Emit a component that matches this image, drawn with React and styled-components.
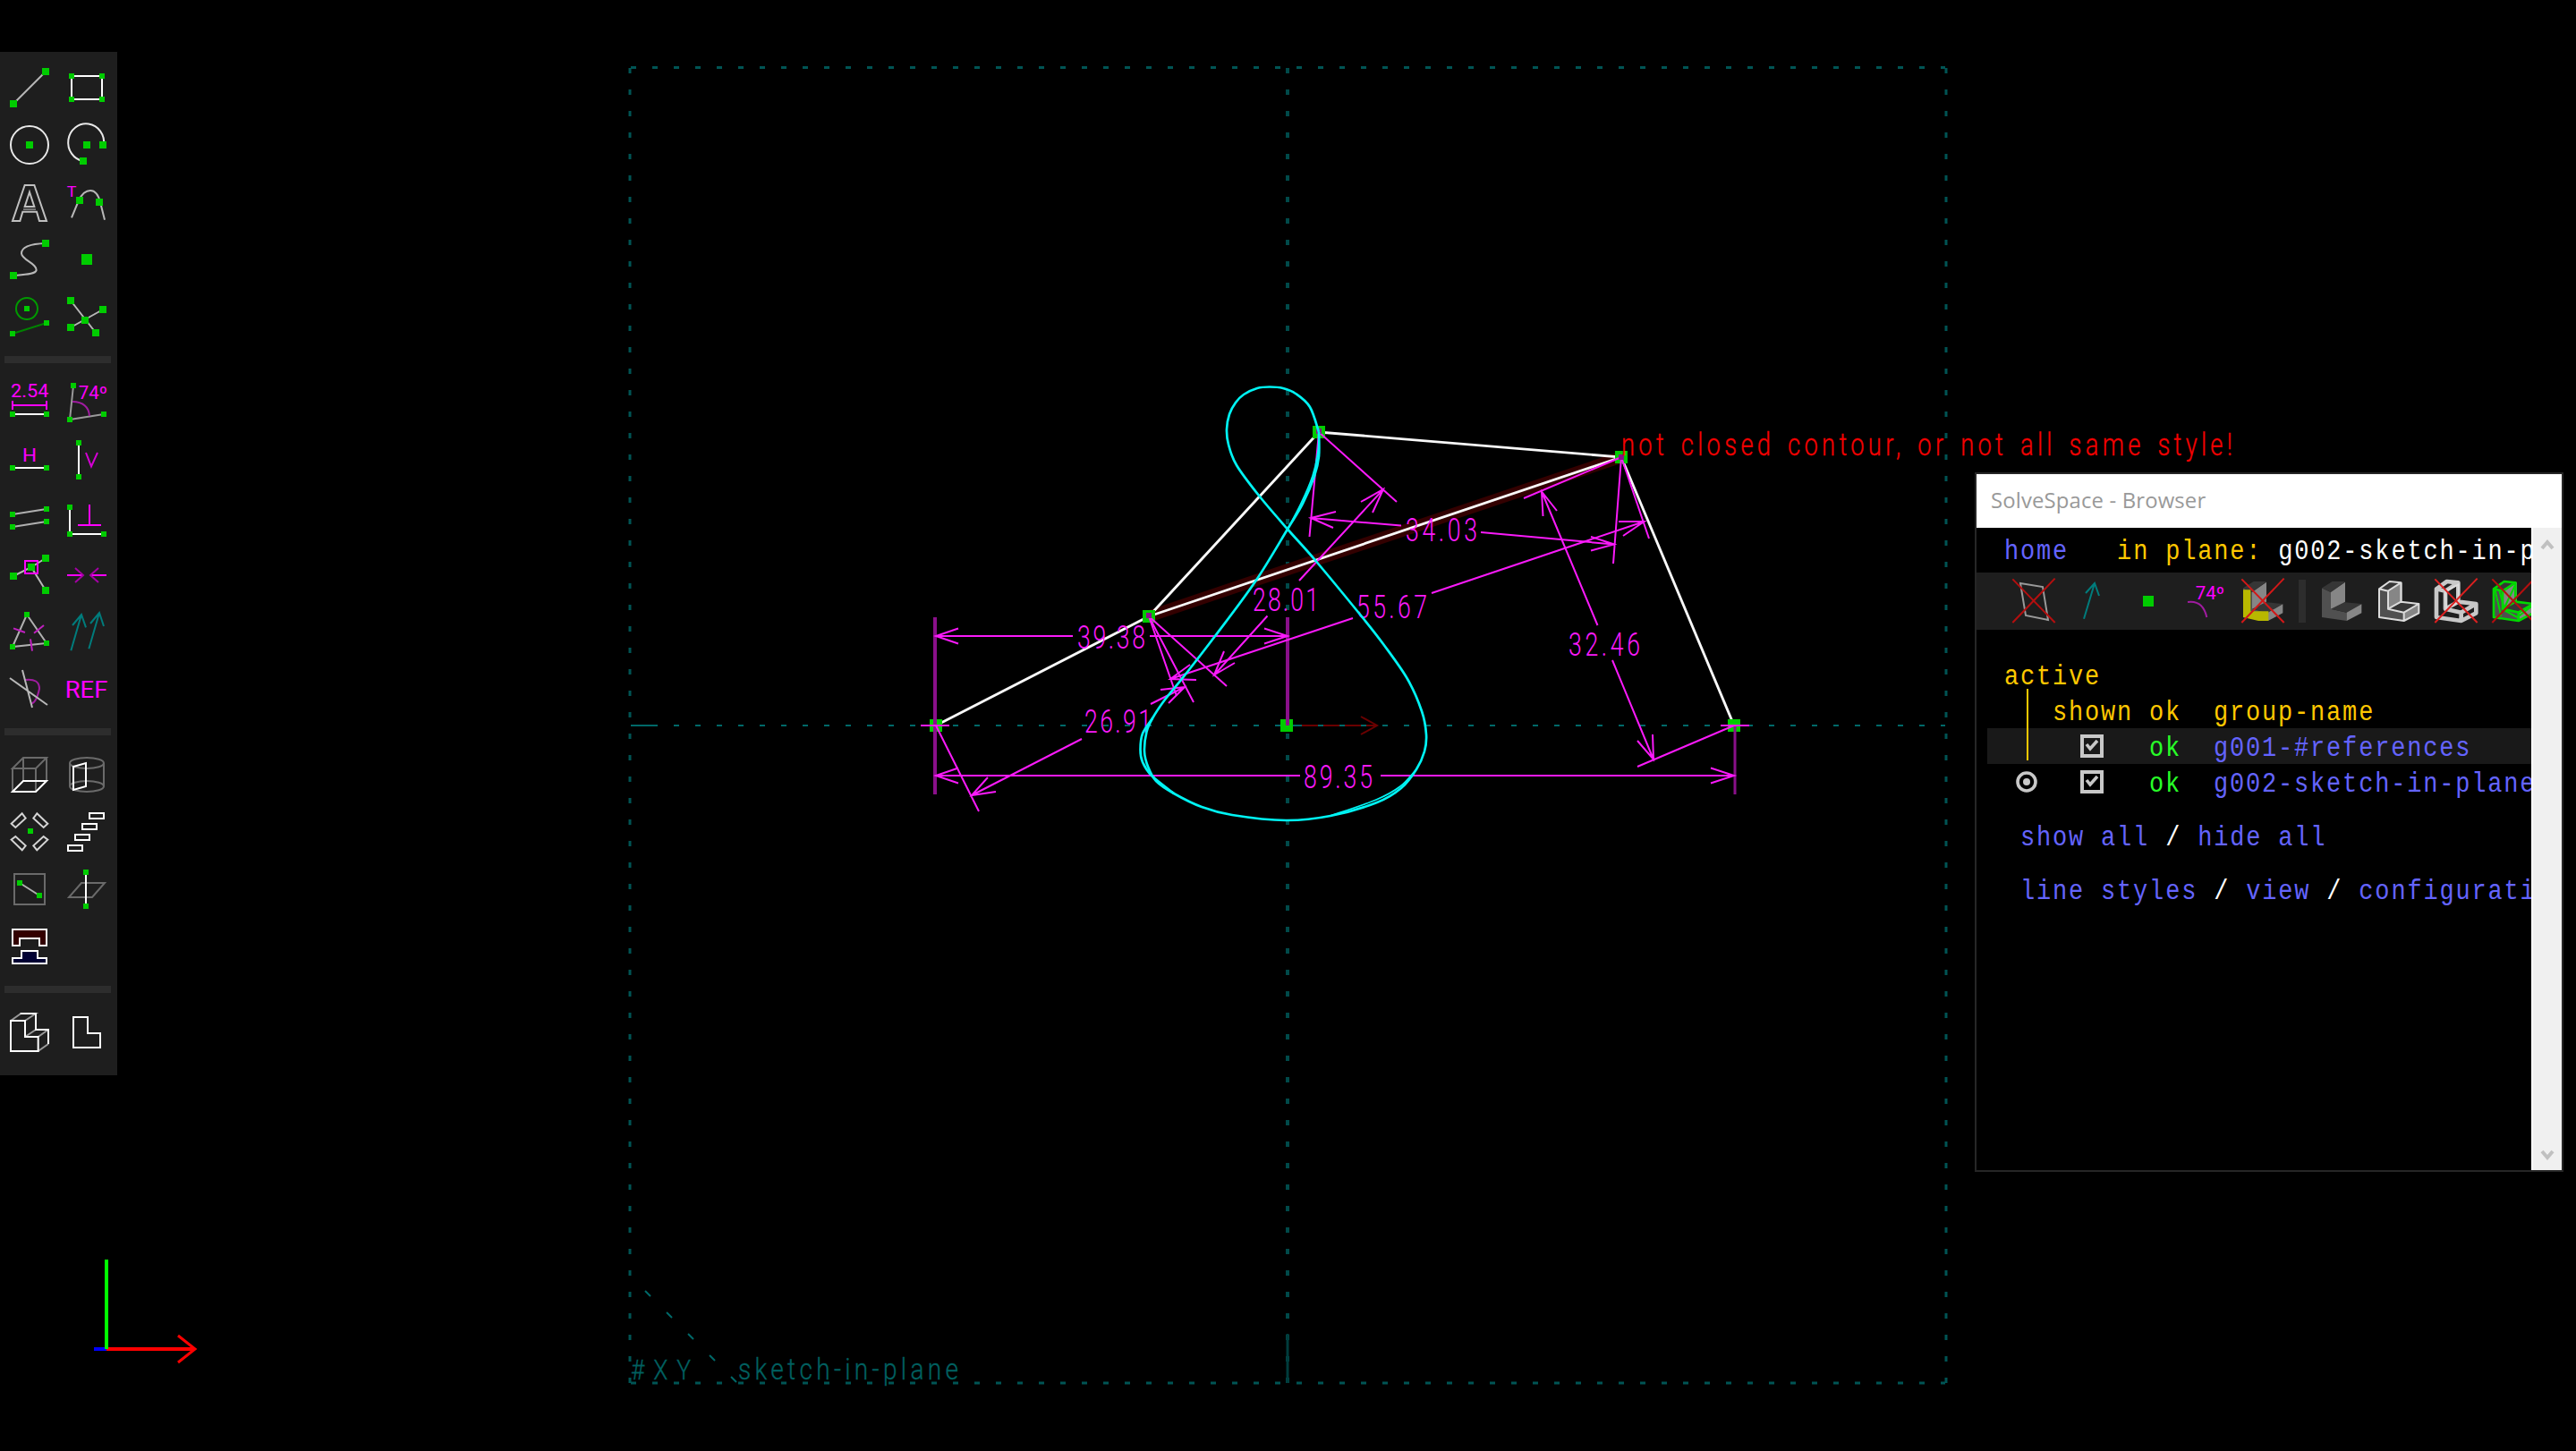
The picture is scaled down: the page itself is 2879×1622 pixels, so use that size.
import React from 'react';
import styled, { createGlobalStyle } from 'styled-components';

const color = {
  panel: '#1e1e1e',
  divider: '#2d2d2d',
  green: '#00cc00',
  magenta: '#ff00ff',
  dim: '#fa1afa',
  dimDark: '#8a108a',
  teal: '#006868',
  white: '#ffffff',
  stroke: '#b8b8b8',
  gray: '#6a6a6a',
  link: '#6464ff',
  label: '#ffc800',
  ok: '#28ff28',
};

const GlobalStyle = createGlobalStyle`
  html, body { margin: 0; background: #000; overflow: hidden; }
  * { box-sizing: border-box; }
`;

const Screen = styled.main`
  display: grid;
  grid-template: 1622px / 2879px;
  background: #000;
  overflow: hidden;
  > * { grid-area: 1 / 1; }
`;

const Canvas = styled.svg`
  display: block;
  width: 2879px;
  height: 1622px;
`;

/* ---------- tool bar ---------- */

const ToolBar = styled.nav`
  position: relative;
  align-self: start;
  justify-self: start;
  display: flex;
  flex-direction: column;
  width: 131px;
  height: 1144px;
  margin-top: 58px;
  padding: 8px 2px 0 1px;
  background: ${color.panel};
`;

const ToolGroup = styled.div`
  display: grid;
  grid-template-columns: 64px 64px;
  grid-auto-rows: 64px;
`;

const ToolDivider = styled.div`
  height: 8px;
  margin: 12px 5px 12px 4px;
  background: ${color.divider};
`;

const ToolButton = styled.button`
  display: block;
  width: 64px;
  height: 64px;
  padding: 0;
  border: 0;
  background: none;
`;

const Glyph = styled.svg`
  display: block;
  width: 64px;
  height: 64px;
  fill: none;
  stroke-width: 6;
`;

const Dots = ({ at, s = 18, fill = color.green }) =>
  at.map(([x, y], i) => (
    <rect key={i} x={x - s / 2} y={y - s / 2} width={s} height={s} fill={fill} stroke="none" />
  ));

const Label = ({ x, y, w, size, children }) => (
  <text
    x={x}
    y={y}
    textLength={w}
    lengthAdjust="spacingAndGlyphs"
    fontSize={size}
    fontFamily="Roboto, sans-serif"
    fill={color.magenta}
    stroke="none"
  >
    {children}
  </text>
);

const W = color.white;
const S = color.stroke;
const M = color.magenta;
const P = '#a01ca0';

const drawTools = [
  <>
    <path d="M45 198L153 90" stroke={S} />
    <Dots at={[[45, 198], [153, 90]]} s={24} />
  </>,
  <>
    <rect x="240" y="105" width="102" height="78" stroke={W} />
    <Dots at={[[240, 105], [342, 105], [240, 183], [342, 183]]} />
  </>,
  <>
    <circle cx="99" cy="336" r="63" stroke="#e8e8e8" />
    <Dots at={[[99, 336]]} s={24} />
  </>,
  <>
    <path d="M348 336A60 63 0 1 0 279 390" stroke="#e8e8e8" />
    <Dots at={[[291, 336], [345, 336], [279, 390]]} s={24} />
  </>,
  <>
    <path
      d="M42 591L83 471H115L156 591H132L123 560H76L67 591ZM83 543L99 494L115 543Z"
      stroke="#c0c0c0"
    />
    <path d="M78 552H120" stroke="#777" />
  </>,
  <>
    <path d="M240 580L264 522Q280 489 303 489Q326 489 336 528L351 587" stroke={S} />
    <Dots at={[[267, 522], [333, 528]]} s={24} />
    <Label x={224} y={509} w={32} size={49}>T</Label>
  </>,
  <>
    <path d="M153 666C90 668 72 684 72 700C74 722 124 734 122 756C120 770 84 771 45 774" stroke={S} />
    <Dots at={[[45, 774], [153, 666]]} s={24} />
  </>,
  <Dots at={[[291, 720]]} s={36} />,
  <>
    <circle cx="90" cy="885" r="36" stroke="#009a00" />
    <path d="M42 969L156 933" stroke="#008200" />
    <Dots at={[[90, 885], [42, 969], [156, 933]]} />
  </>,
  <>
    <path d="M237 858L321 966M237 948L345 888" stroke={S} />
    <Dots at={[[237, 858], [321, 966], [237, 948], [345, 888], [285, 924]]} s={24} />
  </>,
];

const constraintTools = [
  <>
    <Label x={36} y={192} w={127} size={59}>2.54</Label>
    <path d="M42 204V234M156 204V234M42 219H156" stroke={M} />
    <path d="M42 249H156" stroke={W} />
    <Dots at={[[42, 249], [156, 249]]} />
  </>,
  <>
    <path d="M246 153L234 267L348 249" stroke="#999" />
    <path d="M243 207Q296 208 300 255" stroke={P} />
    <Dots at={[[246, 153], [234, 267], [348, 249]]} />
    <Label x={263} y={198} w={97} size={59}>74º</Label>
  </>,
  <>
    <Label x={75} y={408} w={48} size={59}>H</Label>
    <path d="M42 429H156" stroke={W} />
    <Dots at={[[42, 429], [156, 429]]} />
  </>,
  <>
    <path d="M264 345V459" stroke={W} />
    <Dots at={[[264, 345], [264, 459]]} />
    <path d="M288 378L306 424L327 378" stroke="#d400d4" />
  </>,
  <>
    <path d="M42 585L156 567M42 627L156 609" stroke="#b0b0b0" />
    <Dots at={[[42, 585], [156, 567], [42, 627], [156, 609]]} />
  </>,
  <>
    <path d="M234 561V651H348" stroke={W} />
    <path d="M300 552V621M261 621H339" stroke={M} />
    <Dots at={[[234, 561], [234, 651], [348, 651]]} />
  </>,
  <>
    <path d="M45 792L105 762L153 732M105 762L153 840" stroke={S} />
    <rect x="84" y="741" width="42" height="42" stroke={M} />
    <Dots at={[[45, 792], [105, 762], [153, 732], [153, 840]]} s={24} />
  </>,
  <>
    <path d="M225 789H279M303 789H357" stroke={M} />
    <path d="M252 765L279 789L252 813M330 765L303 789L330 813" stroke="#a400a4" />
  </>,
  <>
    <path d="M42 1029L90 921L156 1017Z" stroke="#b0b0b0" />
    <path d="M45 967L84 981M114 983L147 957M102 1003L108 1043" stroke="#c020c0" />
    <Dots at={[[42, 1029], [90, 921], [156, 1017]]} />
  </>,
  <>
    <path
      d="M238 1042L273 921M243 957L273 921L288 964M298 1036L333 915M303 951L333 915L348 960"
      stroke="#007c7c"
    />
  </>,
  <>
    <path d="M84 1140Q132 1134 132 1170Q122 1216 105 1220" stroke={P} />
    <path d="M33 1134L159 1224M75 1107L108 1233" stroke={S} />
  </>,
  <Label x={218} y={1199} w={143} size={76}>REF</Label>,
];

const groupTools = [
  <>
    <path d="M42 177L78 141H156L120 177ZM42 177V255M78 141V219M156 141V219M120 177V255" stroke={color.gray} />
    <path d="M42 255L78 219H156L120 255Z" stroke={W} />
  </>,
  <>
    <ellipse cx="291" cy="159" rx="57" ry="18" stroke={color.gray} />
    <ellipse cx="291" cy="237" rx="57" ry="18" stroke={color.gray} />
    <path d="M234 159V237M348 159V237" stroke={color.gray} />
    <path d="M246 171L288 159V237L246 249Z" stroke={W} />
  </>,
  <>
    <g stroke="#d4d4d4">
      <path d="M74 328L86 344L52 375L38 362Z" />
      <path d="M124 328L112 344L146 375L160 362Z" />
      <path d="M74 451L86 436L52 405L38 416Z" />
      <path d="M124 451L112 436L146 405L160 416Z" />
    </g>
    <Dots at={[[102, 387]]} />
  </>,
  <path
    d="M300 327H348V345H300ZM276 363H324V381H276ZM252 399H300V417H252ZM228 435H276V453H228Z"
    stroke={W}
  />,
  <>
    <rect x="48" y="531" width="102" height="102" stroke={color.gray} />
    <path d="M66 561L132 603" stroke="#b0b0b0" />
    <Dots at={[[66, 561], [132, 603]]} />
  </>,
  <>
    <path d="M273 561H351L309 609H231Z" stroke={color.gray} />
    <path d="M288 525V639" stroke={W} />
    <Dots at={[[288, 525], [288, 639]]} />
  </>,
  <>
    <path d="M42 717H156V771H132V747H66V771H42Z" fill="#330000" stroke={W} />
    <path d="M42 831V813H72V789H126V813H156V831Z" fill="#000033" stroke={W} />
  </>,
];

const faceTools = [
  <>
    <path d="M36 1023L70 999H120L84 1023M84 1077L120 1053M128 1077L162 1053M128 1125L162 1101" stroke="#999" />
    <path d="M36 1023H84V1077H128V1125H36ZM68 999H120V1053H162V1101" stroke={W} />
  </>,
  <path d="M246 1011H294V1065H336V1113H246Z" stroke={W} />,
];

const Tools = ({ items, top }) => (
  <ToolGroup>
    {items.map((art, i) => (
      <ToolButton key={i} type="button">
        <Glyph viewBox={`${3 + 192 * (i % 2)} ${top + 192 * Math.floor(i / 2)} 192 192`}>{art}</Glyph>
      </ToolButton>
    ))}
  </ToolGroup>
);

/* ---------- sketch canvas ---------- */

const smooth = (pts) => {
  let d = `M${pts[0][0]} ${pts[0][1]}`;
  for (let i = 0; i < pts.length - 1; i += 1) {
    const p0 = pts[i - 1] || pts[i];
    const p1 = pts[i];
    const p2 = pts[i + 1];
    const p3 = pts[i + 2] || p2;
    d += `C${p1[0] + (p2[0] - p0[0]) / 6} ${p1[1] + (p2[1] - p0[1]) / 6} ${p2[0] - (p3[0] - p1[0]) / 6} ${
      p2[1] - (p3[1] - p1[1]) / 6
    } ${p2[0]} ${p2[1]}`;
  }
  return d;
};

const couplerCurve = smooth([
  [1474, 483], [1464, 455], [1448, 440], [1434, 434], [1419, 432.5], [1405, 434], [1390, 441], [1381, 450],
  [1374, 463], [1371, 480], [1373, 497], [1382, 520], [1407, 554], [1439, 591.5], [1471, 627.5], [1525, 693],
  [1546, 720], [1573, 759], [1589, 795], [1594, 821], [1592, 840], [1583, 860], [1566, 881], [1539, 897],
  [1487, 912], [1437, 917], [1377, 911], [1343, 902], [1312, 887], [1292, 873], [1283, 857], [1279, 840],
  [1281.5, 818], [1288, 803], [1302, 782], [1322, 757.5], [1358, 711], [1403, 650], [1439, 591.5],
  [1456, 563], [1469, 532], [1474, 510], [1474, 483],
]);
const couplerInner = smooth([[1288, 803], [1277, 820], [1274.5, 838], [1277, 852], [1287, 867], [1312, 887]]);
const couplerRight = smooth([[1439, 591.5], [1454, 563], [1467, 532], [1473, 505], [1474, 483]]);
const couplerLow = smooth([[1583, 860], [1565, 879], [1538, 894], [1487, 912]]);

const dims = [
  {
    value: '39.38', x: 1204, y: 725, w: 76,
    d: 'M1046 711H1199M1285 711H1439M1071 702.5L1046 711L1071 719.5M1413 702.5L1439 711L1413 719.5',
  },
  {
    value: '89.35', x: 1457, y: 881, w: 77,
    d: 'M1046 867H1453M1543 867H1938M1071 858.5L1046 867L1071 875.5M1912 858.5L1938 867L1912 875.5',
  },
  {
    value: '26.91', x: 1212, y: 819, w: 75,
    d: 'M1046 811L1094 907M1284 689L1334 785M1086 889L1209 826M1286 787L1324 768M1104 869L1086 889L1113 885M1297 771L1324 768L1306 786',
  },
  {
    value: '28.01', x: 1400, y: 683, w: 74,
    d: 'M1284 689L1371 767M1474 483L1561 561M1357 754.5L1416.5 688.5M1452 649L1546 547M1368 728L1357 754.5L1380 741M1521 561L1546 547L1534 573',
  },
  {
    value: '55.67', x: 1516, y: 691, w: 79,
    d: 'M1284 689L1315 778M1812 511L1843 602M1308 759L1512 691M1600 663L1837.5 583M1337 760L1308 759L1330 743M1809 583H1837.5L1814 599',
  },
  {
    value: '34.03', x: 1571, y: 605, w: 80,
    d: 'M1474 483L1463.5 600M1812 511L1803 630M1465 579L1566 587.5M1655 595L1804 608.5M1493 572L1465 579L1490 590M1778 600L1804 608.5L1778 615.5',
  },
  {
    value: '32.46', x: 1753, y: 733, w: 80,
    d: 'M1812 511L1703 557M1938 811L1830 857M1723 549.5L1785.5 699M1802 738L1848 849M1724.5 577L1723 549.5L1740 571M1830 828L1848 849L1847 821',
  },
];

const Geometry = styled.g`
  fill: none;
  stroke: ${(p) => p.$stroke};
  stroke-width: ${(p) => p.$width || 2};
`;

const DimText = styled.text`
  font: 300 37px Roboto, 'Open Sans', sans-serif;
  fill: ${color.dim};
`;

const VectorText = styled.text`
  font: 300 ${(p) => p.$size}px Roboto, 'Open Sans', sans-serif;
  fill: ${(p) => p.$fill};
  stroke: ${(p) => p.$fill};
  stroke-width: 0.35px;
  word-spacing: ${(p) => p.$gap || 0}px;
`;

const Sketch = () => (
  <Canvas viewBox="0 0 2879 1622">
    <Geometry $stroke={color.teal}>
      <path d="M704 76V1546" strokeDasharray="6 18" strokeWidth="3" stroke="#005454" />
      <path d="M2175 76V1546" strokeDasharray="6 18" strokeWidth="3" stroke="#005454" />
      <path d="M705 75.5H2174" strokeDasharray="6 18" strokeWidth="3" stroke="#005454" />
      <path d="M705 1546H2174" strokeDasharray="6 18" strokeWidth="3" stroke="#005454" />
      <path d="M721 1443L824 1546" strokeDasharray="8.5 25.45" />
      <path d="M1439 76V1546" strokeDasharray="6 18" strokeWidth="4" stroke="#004a4a" />
      <path d="M1439 1491V1546" strokeWidth="3" stroke="#003c3c" />
      <path d="M705 811H735" strokeWidth="2" />
    </Geometry>
    <Geometry $stroke="#6a0000">
      <path d="M1455 811H1539M1521 801L1539 811L1521 821" />
    </Geometry>
    <Geometry $stroke={color.teal}>
      <path d="M705 811H2174" strokeDasharray="6 18" />
      <path d="M1425 811H1455" />
    </Geometry>

    <VectorText transform="translate(705 1542) scale(0.85 1)" $size={31} $fill="#006060" textLength={67 / 0.85}>
      #XY
    </VectorText>
    <VectorText transform="translate(825 1542) scale(0.85 1)" $size={33} $fill="#006060" textLength={246 / 0.85}>
      sketch-in-plane
    </VectorText>

    <path d="M1284 689L1812 511" stroke="#330000" strokeWidth="13" />
    <Geometry $stroke="#f8f8f8" $width={2.9}>
      <path d="M1046 811L1284 689L1474 483L1812 511L1938 811M1284 689L1812 511" />
    </Geometry>
    <Dots at={[[1046, 811], [1438, 811], [1284, 689], [1474, 483], [1812, 511], [1938, 811]]} s={14} />

    <Geometry $stroke={color.dimDark} $width={4}>
      <path d="M1045 690V888M1439 690V811" />
      <path d="M1939 811V888" strokeWidth="3" />
    </Geometry>
    <Geometry $stroke={color.dim}>
      <path d="M1029 811H1061M1923 811H1955" />
      {dims.map((dim) => (
        <path key={dim.value} d={dim.d} />
      ))}
    </Geometry>
    <Dots at={[[1284, 688], [1474, 482], [1812, 511]]} s={6} fill="#8a108a" />
    {dims.map((dim) => (
      <DimText
        key={dim.value}
        transform={`translate(${dim.x} ${dim.y}) scale(0.72 1)`}
        textLength={dim.w / 0.72}
      >
        {dim.value}
      </DimText>
    ))}

    <Geometry $stroke="#00f4f4" $width={2.7}>
      <path d={couplerCurve} />
      <path d={couplerInner} />
      <path d={couplerRight} strokeWidth="1.8" />
      <path d={couplerLow} strokeWidth="1.8" />
    </Geometry>

    <VectorText
      transform="translate(1812 509) scale(0.76 1)"
      $size={36}
      $gap={5}
      $fill="#f40000"
      textLength={683 / 0.76}
    >
      not closed contour, or not all same style!
    </VectorText>

    <Geometry $stroke="#ff0000" $width={4}>
      <path d="M105 1508H119" stroke="#0000ff" />
      <path d="M119 1508H217" />
      <path d="M199 1493L218 1508L199 1523" strokeWidth="3" />
      <path d="M119 1408V1508" stroke="#00ff00" />
    </Geometry>
  </Canvas>
);

/* ---------- property browser ---------- */

const Window = styled.section`
  position: relative;
  align-self: start;
  justify-self: start;
  display: flex;
  flex-direction: column;
  width: 658px;
  height: 782px;
  margin: 528px 0 0 2207px;
  border: 2px solid #262626;
  background: #000;
`;

const TitleBar = styled.header`
  display: flex;
  align-items: center;
  height: 60px;
  padding: 0 0 4px 16px;
  background: #fff;
  color: #999;
  font: 400 24px 'Open Sans', 'Noto Sans', sans-serif;
  letter-spacing: 0.15px;
`;

const TitleText = styled.span`
  transform: scaleX(0.995);
  transform-origin: left;
`;

const WindowBody = styled.div`
  display: flex;
  flex: 1;
  min-height: 0;
`;

const Page = styled.div`
  width: 620px;
  overflow: hidden;
  font: 31px/40px 'Liberation Mono', monospace;
`;

const ScrollBar = styled.div`
  display: flex;
  flex-direction: column;
  justify-content: space-between;
  align-items: center;
  width: 34px;
  padding: 12px 0 10px;
  border-left: 2px solid #fff;
  background: #f0f0f0;
`;

/* Condensed terminal face: every character advances 18px once scaled. */
const Mono = styled.span`
  display: inline-block;
  flex: none;
  padding-top: 3px;
  white-space: pre;
  line-height: 40px;
  letter-spacing: 2.09px;
  transform: scaleX(0.8706);
  transform-origin: left;
  color: ${(p) => p.$color || color.label};
`;

const Ink = styled.span`
  color: ${(p) => p.$color};
`;

const Line = styled.div`
  height: 40px;
  margin-top: ${(p) => p.$gap || 0}px;
  padding-left: ${(p) => p.$indent || 31}px;
  white-space: nowrap;
`;

const IconStrip = styled.div`
  display: flex;
  align-items: center;
  width: 700px;
  height: 64px;
  margin-top: 6px;
  padding-left: 32px;
  background: ${color.panel};
`;

const StripDivider = styled.div`
  width: 8px;
  height: 48px;
  margin: 0 8px;
  background: ${color.divider};
`;

const GroupRow = styled.div`
  display: grid;
  grid-template-columns: 54px 108px 72px 374px;
  height: 40px;
  margin-left: 12px;
  padding-left: 18px;
  background: ${(p) => (p.$shaded ? '#191919' : 'transparent')};
`;

const Cell = styled.div`
  position: relative;
  display: flex;
  align-items: ${(p) => (p.$pad ? 'center' : 'flex-start')};
  height: 40px;
  padding-left: ${(p) => p.$pad || 1}px;
`;

const ActiveRule = styled.div`
  position: absolute;
  z-index: 1;
  top: -4px;
  left: 26px;
  width: 2px;
  height: 80px;
  background: ${color.label};
`;

const Mark = styled.svg`
  display: block;
  width: 26px;
  height: 26px;
  fill: none;
  stroke: #c8c8c8;
  stroke-width: 4;
`;

const CheckMark = () => (
  <Mark viewBox="0 0 26 26">
    <rect x="2" y="2" width="22" height="22" />
    <path d="M7 11L11 16L19 7" strokeWidth="3.6" />
  </Mark>
);

const RadioMark = () => (
  <Mark viewBox="0 0 26 26">
    <circle cx="12" cy="13" r="10" strokeWidth="3.6" />
    <circle cx="12" cy="13" r="4" fill="#c8c8c8" stroke="none" />
  </Mark>
);

const Cross = ({ x, c = '#b40f0f' }) => (
  <path d={`M${x} 22L${x + 142} 168M${x + 142} 20L${x} 168`} stroke={c} strokeWidth="6" />
);

const Solid = ({ x, faces = ['#505050', '#363636', '#868686'], edge, edgeWidth = 6 }) => (
  <g transform={`translate(${x} 0)`} strokeLinejoin="round" stroke="none">
    <path d="M45 52L75 66V122L128 134V162L45 150Z" fill={faces[0]} />
    <path d="M45 52L80 30H123L75 66ZM75 122L105 98L178 105L128 134Z" fill={faces[1]} />
    <path d="M75 66L123 32V98L75 122ZM128 134L178 106V136L128 162Z" fill={faces[2]} />
    {edge && (
      <path
        d="M45 55L80 30L118 34L75 62ZM45 55V150L128 162V134L75 122V62M118 34V98L75 122M118 98L178 105L128 134M178 105V136L128 162"
        fill="none"
        stroke={edge}
        strokeWidth={edgeWidth}
      />
    )}
  </g>
);

const Strip = ({ x, children }) => <Glyph viewBox={`${x} 0 192 192`}>{children}</Glyph>;

const stripLeft = [
  <>
    <path d="M54 36L129 48L147 159L72 144Z" stroke="#999" />
    <Cross x={28} />
  </>,
  <path d="M267 155L303 36M273 69L303 36L318 78" stroke="#007c7c" />,
  <Dots at={[[483, 96]]} s={36} />,
  <>
    <Label x={641} y={89} w={97} size={58}>74º</Label>
    <path d="M615 99Q666 92 679 150" stroke={P} />
  </>,
  <>
    <Solid x={756} />
    <path d="M801 58H826V130H886V162H852L801 150Z" fill="#b8b800" />
    <Cross x={796} c="#d21818" />
  </>,
];

const stripRight = [
  <Solid x={0} />,
  <Solid x={192} edge="#dcdcdc" />,
  <>
    <Solid x={384} faces={['#1e1e1e', '#1e1e1e', '#1e1e1e']} edge="#c8c8c8" edgeWidth={14} />
    <path d="M459 62L503 40V98L462 122Z" stroke="#dcdcdc" />
    <Cross x={424} c="#dc2020" />
  </>,
  <>
    <Solid x={576} edge="#00d800" edgeWidth={8} />
    <path d="M626 60L646 146M640 60L656 120L694 40M652 124L700 150L752 110" stroke="#00d800" />
    <Cross x={616} />
  </>,
];

const Browser = () => (
  <Window>
    <TitleBar><TitleText>SolveSpace - Browser</TitleText></TitleBar>
    <WindowBody>
      <Page>
        <Line $gap={4}>
          <Mono>
            <Ink $color={color.link}>home</Ink>
            {'   in plane: '}
            <Ink $color="#fff">g002-sketch-in-plane</Ink>
          </Mono>
        </Line>
        <IconStrip>
          {stripLeft.map((art, i) => (
            <Strip key={i} x={3 + 192 * i}>{art}</Strip>
          ))}
          <StripDivider />
          {stripRight.map((art, i) => (
            <Strip key={i} x={15 + 192 * i}>{art}</Strip>
          ))}
        </IconStrip>
        <Line $gap={30}><Mono>active</Mono></Line>
        <GroupRow>
          <Cell><ActiveRule /></Cell>
          <Cell><Mono>shown</Mono></Cell>
          <Cell><Mono>ok</Mono></Cell>
          <Cell><Mono>group-name</Mono></Cell>
        </GroupRow>
        <GroupRow $shaded>
          <Cell />
          <Cell $pad={32}><CheckMark /></Cell>
          <Cell><Mono $color={color.ok}>ok</Mono></Cell>
          <Cell><Mono $color={color.link}>g001-#references</Mono></Cell>
        </GroupRow>
        <GroupRow>
          <Cell $pad={14}><RadioMark /></Cell>
          <Cell $pad={32}><CheckMark /></Cell>
          <Cell><Mono $color={color.ok}>ok</Mono></Cell>
          <Cell><Mono $color={color.link}>g002-sketch-in-plane</Mono></Cell>
        </GroupRow>
        <Line $gap={20} $indent={49}>
          <Mono $color={color.link}>
            show all<Ink $color="#fff"> / </Ink>hide all
          </Mono>
        </Line>
        <Line $gap={20} $indent={49}>
          <Mono $color={color.link}>
            line styles<Ink $color="#fff"> / </Ink>view<Ink $color="#fff"> / </Ink>configuration
          </Mono>
        </Line>
      </Page>
      <ScrollBar>
        <svg width="16" height="14" viewBox="0 0 16 14">
          <path d="M2 11L8 4L14 11" fill="none" stroke="#c0c0c0" strokeWidth="4" />
        </svg>
        <svg width="16" height="14" viewBox="0 0 16 14">
          <path d="M2 3L8 10L14 3" fill="none" stroke="#c0c0c0" strokeWidth="4" />
        </svg>
      </ScrollBar>
    </WindowBody>
  </Window>
);

export default function App() {
  return (
    <>
      <GlobalStyle />
      <Screen>
        <Sketch />
        <ToolBar>
          <Tools items={drawTools} top={48} />
          <ToolDivider />
          <Tools items={constraintTools} top={114} />
          <ToolDivider />
          <Tools items={groupTools} top={102} />
          <ToolDivider />
          <Tools items={faceTools} top={966} />
        </ToolBar>
        <Browser />
      </Screen>
    </>
  );
}
